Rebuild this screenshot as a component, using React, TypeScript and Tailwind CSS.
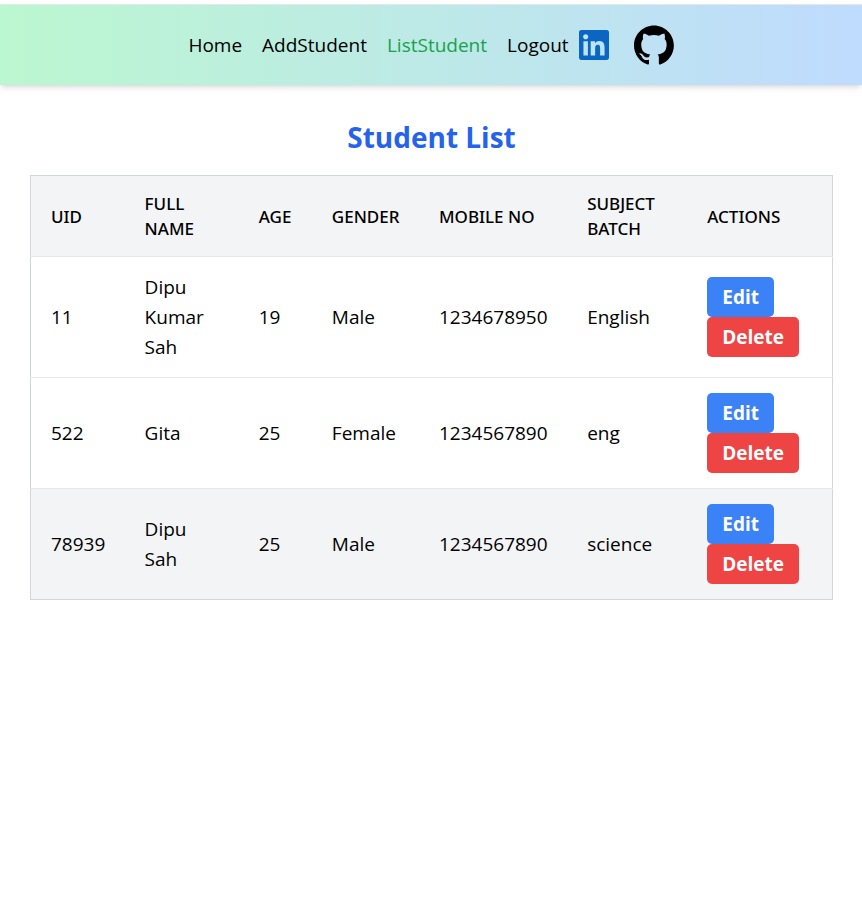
type Student = {
  uid: string;
  name: string;
  age: number;
  gender: string;
  mobile: string;
  batch: string;
};

const students: Student[] = [
  { uid: "11", name: "Dipu Kumar Sah", age: 19, gender: "Male", mobile: "1234678950", batch: "English" },
  { uid: "522", name: "Gita", age: 25, gender: "Female", mobile: "1234567890", batch: "eng" },
  { uid: "78939", name: "Dipu Sah", age: 25, gender: "Male", mobile: "1234567890", batch: "science" },
];

const columns = [
  { title: "UID", width: "w-[94px]" },
  { title: "Full Name", width: "w-[114px]" },
  { title: "Age", width: "w-[73px]" },
  { title: "Gender", width: "w-[107px]" },
  { title: "Mobile No", width: "w-[148px]" },
  { title: "Subject Batch", width: "w-[120px]" },
  { title: "Actions", width: "w-[145px]" },
];

const links = [
  { label: "Home", active: false },
  { label: "AddStudent", active: false },
  { label: "ListStudent", active: true },
  { label: "Logout", active: false },
];

function LinkedInIcon() {
  return (
    <svg viewBox="0 0 24 24" className="size-[30px] fill-[#0a66c2]" aria-hidden="true">
      <path d="M20.447 20.452h-3.554v-5.569c0-1.328-.027-3.037-1.852-3.037-1.853 0-2.136 1.445-2.136 2.939v5.667H9.351V9h3.414v1.561h.046c.477-.9 1.637-1.85 3.37-1.85 3.601 0 4.267 2.37 4.267 5.455v6.286zM5.337 7.433c-1.144 0-2.063-.926-2.063-2.065 0-1.138.92-2.063 2.063-2.063 1.14 0 2.064.925 2.064 2.063 0 1.139-.925 2.065-2.064 2.065zm1.782 13.019H3.555V9h3.564v11.452zM22.225 0H1.771C.792 0 0 .774 0 1.729v20.542C0 23.227.792 24 1.771 24h20.451C23.2 24 24 23.227 24 22.271V1.729C24 .774 23.2 0 22.222 0h.003z" />
    </svg>
  );
}

function GitHubIcon() {
  return (
    <svg viewBox="0 0 98 96" className="size-10 fill-black" aria-hidden="true">
      <path
        fillRule="evenodd"
        clipRule="evenodd"
        d="M48.854 0C21.839 0 0 22 0 49.217c0 21.756 13.993 40.172 33.405 46.69 2.427.49 3.316-1.059 3.316-2.362 0-1.141-.08-5.052-.08-9.127-13.59 2.934-16.42-5.867-16.42-5.867-2.184-5.704-5.42-7.17-5.42-7.17-4.448-3.015.324-3.015.324-3.015 4.934.326 7.523 5.052 7.523 5.052 4.367 7.496 11.404 5.378 14.235 4.074.404-3.178 1.699-5.378 3.074-6.6-10.839-1.141-22.243-5.378-22.243-24.283 0-5.378 1.94-9.778 5.014-13.2-.485-1.222-2.184-6.275.486-13.038 0 0 4.125-1.304 13.426 5.052a46.97 46.97 0 0 1 12.214-1.63c4.125 0 8.33.571 12.213 1.63 9.302-6.356 13.427-5.052 13.427-5.052 2.67 6.763.97 11.816.485 13.038 3.155 3.422 5.015 7.822 5.015 13.2 0 18.905-11.404 23.06-22.324 24.283 1.78 1.548 3.316 4.481 3.316 9.126 0 6.6-.08 11.897-.08 13.526 0 1.304.89 2.853 3.316 2.364 19.412-6.52 33.405-24.935 33.405-46.691C97.707 22 75.788 0 48.854 0z"
      />
    </svg>
  );
}

function NavBar() {
  return (
    <header className="mt-1 flex h-[81px] items-center justify-center border-t border-gray-200 bg-linear-to-r/srgb from-[#bbf7d0] to-[#bfdbfe] shadow-md">
      <nav className="flex items-center">
        <ul className="flex gap-5 text-[19px] leading-[30px]">
          {links.map((link) => (
            <li key={link.label}>
              <a href="#" className={link.active ? "text-[#16a34a]" : "text-black"}>
                {link.label}
              </a>
            </li>
          ))}
        </ul>
        <a href="#" aria-label="LinkedIn" className="ml-[10px]">
          <LinkedInIcon />
        </a>
        <a href="#" aria-label="GitHub" className="ml-[25px]">
          <GitHubIcon />
        </a>
      </nav>
    </header>
  );
}

const buttonClass = "rounded-[5px] px-[15px] py-[5px] text-[19px] leading-[30px] font-bold text-white";

function StudentRow({ student, highlighted }: { student: Student; highlighted: boolean }) {
  return (
    <tr className={highlighted ? "border-t border-gray-200 bg-[#f3f4f6]" : "border-t border-gray-200"}>
      <td className="px-5 py-[15px]">{student.uid}</td>
      <td className="px-5 py-[15px]">{student.name}</td>
      <td className="px-5 py-[15px]">{student.age}</td>
      <td className="px-5 py-[15px]">{student.gender}</td>
      <td className="px-5 py-[15px]">{student.mobile}</td>
      <td className="px-5 py-[15px]">{student.batch}</td>
      <td className="px-5 py-[15px]">
        <div className="flex flex-wrap">
          <button type="button" className={`${buttonClass} bg-[#3b82f6]`}>
            Edit
          </button>
          <button type="button" className={`${buttonClass} bg-[#ef4444]`}>
            Delete
          </button>
        </div>
      </td>
    </tr>
  );
}

export default function App() {
  return (
    <div className="flow-root min-h-screen bg-white font-['Open_Sans','Noto_Sans',sans-serif] text-black">
      <NavBar />
      <main className="pt-[30px] pr-[29px] pl-[30px]">
        <h1 className="mb-[15px] text-center text-[28px] leading-[45px] font-bold text-[#2563eb]">Student List</h1>
        <table className="w-full table-fixed border-collapse border border-gray-300 text-left text-[19px] leading-[30px]">
          <thead className="bg-[#f3f4f6] font-['Noto_Sans',sans-serif] text-[17px] leading-[25px] uppercase">
            <tr>
              {columns.map((column) => (
                <th key={column.title} scope="col" className={`${column.width} px-5 py-[15px] font-medium`}>
                  {column.title}
                </th>
              ))}
            </tr>
          </thead>
          <tbody>
            {students.map((student, index) => (
              <StudentRow key={student.uid} student={student} highlighted={index === 2} />
            ))}
          </tbody>
        </table>
      </main>
    </div>
  );
}
